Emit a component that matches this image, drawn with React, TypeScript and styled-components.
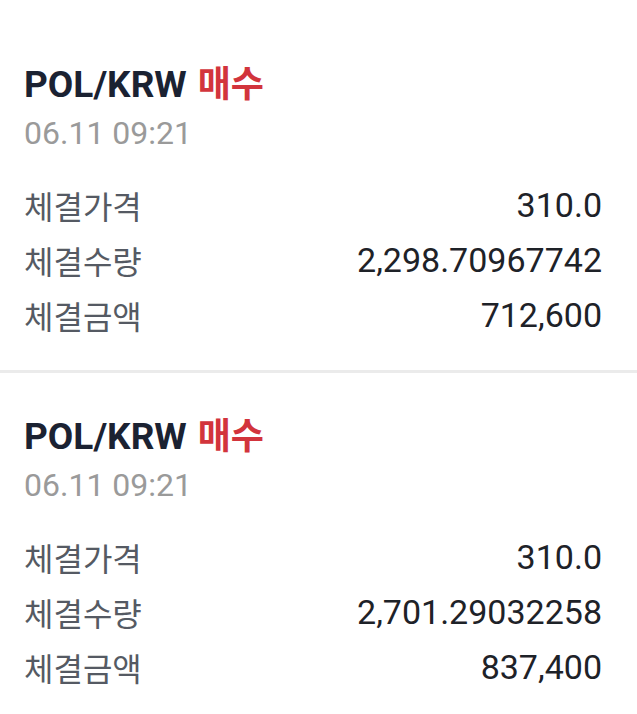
import React from 'react';
import styled, { createGlobalStyle } from 'styled-components';

const GlobalStyle = createGlobalStyle`
  html, body {
    margin: 0;
    padding: 0;
    background: #ffffff;
  }
  body {
    font-family: Roboto, "Noto Sans CJK KR", sans-serif;
    -webkit-font-smoothing: antialiased;
  }
`;

const List = styled.div`
  padding-top: 21px;
`;

const Card = styled.div`
  padding: 44px 35px 28px 24px;
  border-bottom: 3px solid #ebebeb;
`;

const Title = styled.div`
  display: flex;
  align-items: center;
  gap: 11px;
  height: 40px;
  font-size: 37px;
  font-weight: 700;
  color: #1b2232;
  line-height: 40px;
`;

const Side = styled.span<{ $side: 'buy' | 'sell' }>`
  font-size: 36px;
  color: ${({ $side }) => ($side === 'buy' ? '#d2343c' : '#1a5fd1')};
`;

const DateText = styled.div`
  margin-top: 10px;
  font-size: 32px;
  line-height: 36px;
  color: #9a9a9a;
`;

const Rows = styled.div`
  margin-top: 26px;
  display: flex;
  flex-direction: column;
`;

const Row = styled.div`
  display: flex;
  justify-content: space-between;
  align-items: center;
  height: 55px;
`;

const Label = styled.span`
  font-size: 32px;
  color: #555a63;
`;

const Value = styled.span`
  font-size: 34px;
  color: #1e2228;
`;

interface Trade {
  id: string;
  market: string;
  side: 'buy' | 'sell';
  time: string;
  price: string;
  volume: string;
  amount: string;
}

const trades: Trade[] = [
  {
    id: '1',
    market: 'POL/KRW',
    side: 'buy',
    time: '06.11 09:21',
    price: '310.0',
    volume: '2,298.70967742',
    amount: '712,600',
  },
  {
    id: '2',
    market: 'POL/KRW',
    side: 'buy',
    time: '06.11 09:21',
    price: '310.0',
    volume: '2,701.29032258',
    amount: '837,400',
  },
];

const App: React.FC = () => {
  return (
    <>
      <GlobalStyle />
      <List>
        {trades.map((t) => (
          <Card key={t.id}>
            <Title>
              {t.market}
              <Side $side={t.side}>{t.side === 'buy' ? '매수' : '매도'}</Side>
            </Title>
            <DateText>{t.time}</DateText>
            <Rows>
              <Row>
                <Label>체결가격</Label>
                <Value>{t.price}</Value>
              </Row>
              <Row>
                <Label>체결수량</Label>
                <Value>{t.volume}</Value>
              </Row>
              <Row>
                <Label>체결금액</Label>
                <Value>{t.amount}</Value>
              </Row>
            </Rows>
          </Card>
        ))}
      </List>
    </>
  );
};

export default App;
